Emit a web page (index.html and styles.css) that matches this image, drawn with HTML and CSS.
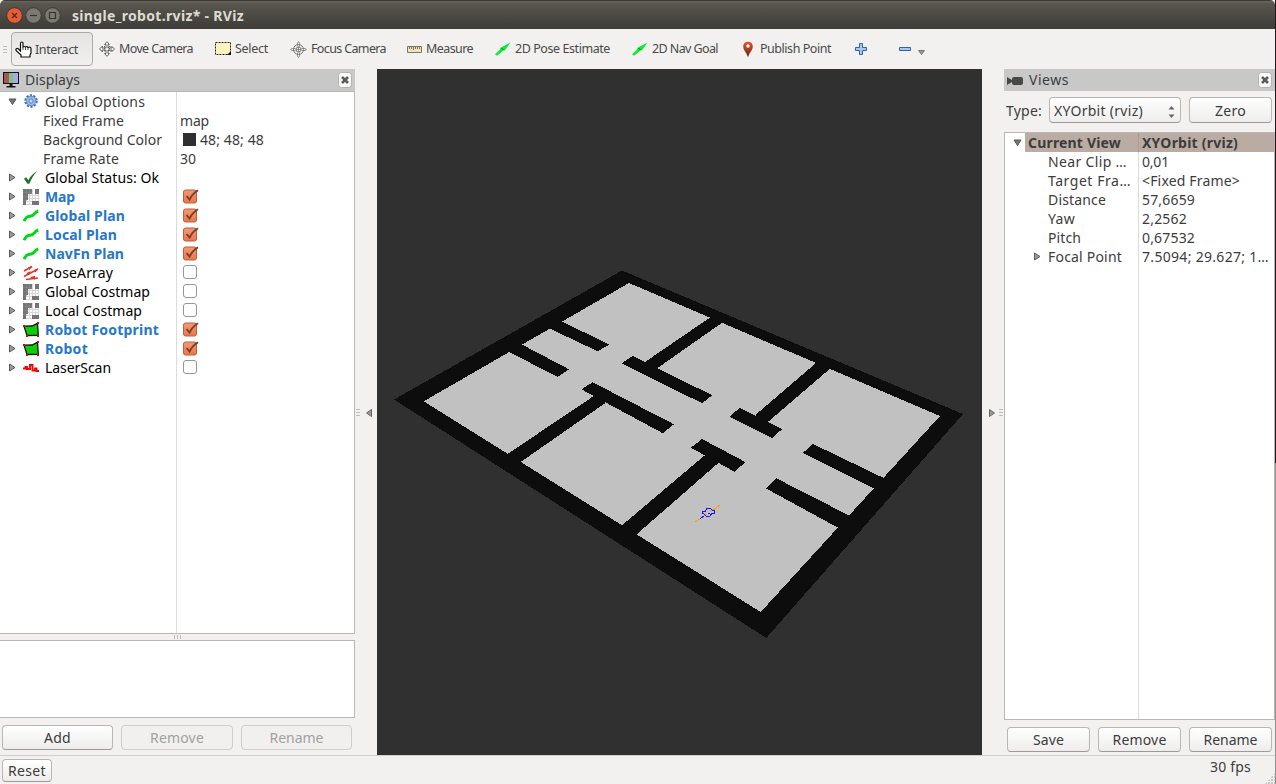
FILE: index.html
```html
<!DOCTYPE html>
<html lang="en">
<head>
<meta charset="utf-8">
<title>single_robot.rviz* - RViz</title>
<link rel="stylesheet" href="styles.css">
</head>
<body>
<svg class="defs" width="0" height="0">
  <defs>
    <linearGradient id="pinfill" x1="0" y1="0" x2="0" y2="1"><stop offset="0" stop-color="#f04b2c"/><stop offset="1" stop-color="#54301c"/></linearGradient>
    <linearGradient id="checkfill" x1="0" y1="0" x2="0" y2="1"><stop offset="0" stop-color="#f39a77"/><stop offset="1" stop-color="#ec7548"/></linearGradient>
    <symbol id="right" viewBox="0 0 8 9"><path d="M1.500 1 7 4.500 1.500 8Z" fill="#9a9a98" stroke="#5a5a58"/></symbol>
    <symbol id="down" viewBox="0 0 9 8"><path d="M1 1h7L4.500 6.500Z" fill="#777775" stroke="#555"/></symbol>
    <symbol id="close" viewBox="0 0 14 16"><rect x=".5" y=".5" width="13" height="15" rx="3" fill="#fbfbfa" stroke="#b2b2b0"/><path d="M4 5l6 6m0-6l-6 6" stroke="#5b5b59" stroke-width="2.600"/></symbol>
    <symbol id="gear" viewBox="0 0 14 14"><circle cx="7" cy="7" r="5.600" fill="none" stroke="#3c70b5" stroke-width="2.200" stroke-dasharray="2.200 1.300"/><circle cx="7" cy="7" r="4.700" fill="#9dbde4" stroke="#5f8fcd"/><circle cx="7" cy="7" r="2.200" fill="none" stroke="#5b8bc8"/><circle cx="7" cy="7" r=".8" fill="#fff"/></symbol>
    <symbol id="ok" viewBox="0 0 16 16"><path d="M1 8.800 3.200 7.300l2.200 3C7.200 6.500 10 3.500 14 1 10.600 5 8.500 8.500 6.300 13.800H4.500Z" fill="#1d7325"/></symbol>
    <symbol id="map" viewBox="0 0 16 16"><path fill="#fff" d="M0 0h16v16H0z"/><path d="M6.500 0v16M9.500 0v16M12.500 0v16M15.500 4v12M5 6.500h11M5 9.500h11M3 12.500h13M3 15.500h13" stroke="#d6d6d6"/><path d="M0 0h9v5H5v6H3v5H0ZM12 0h4v5h-4ZM9 12h7v4H9Z" fill="#747474"/><path d="M3.500 0v12M6.500 0v5M0 3.500h9M0 7.500h5M0 11.500h3" stroke="#8c8c8c" stroke-width=".5"/></symbol>
    <symbol id="path" viewBox="0 0 16 16"><path d="M1 13.200C3 9.200 4 8.500 7 8.300 12 8 10.500 4.200 15.300 3" stroke="#00d815" stroke-width="2.900" fill="none"/></symbol>
    <symbol id="poses" viewBox="0 0 16 16"><g stroke="#e63127" fill="#e63127"><path d="M1 6 9 1.500M1 11.500 15 4M3 14.500l12-1.500" stroke-width="1.500"/><path d="M9.500 1 5 2.500 6.500 5ZM8 6 3.500 8l2 2.500ZM15.500 3.500 11 5l1.500 2.500ZM7 12.300l5-1.500v4Z" stroke="none"/></g></symbol>
    <symbol id="polygon" viewBox="0 0 16 16"><path d="M1 4.200 9 4l5.500-2.700.8 12L4 13.500Z" fill="#0ace0a" stroke="#111" stroke-width="1.300"/><path d="M0 3h2v2H0zM14 0h2v2h-2zM3 13h2v2H3zM14 13h2v2h-2zM8 3h1v1H8z" fill="#f00000"/></symbol>
    <symbol id="laser" viewBox="0 0 16 16"><path d="M0 8.500h2.500V7H4v2h3V5h2.500v5.500H12V8.500h1.500V11H16" stroke="#f20505" stroke-width="1.900" fill="none"/></symbol>
    <symbol id="checked" viewBox="0 0 17 16"><rect x="1.500" y="2" width="13" height="13" rx="2" fill="url(#checkfill)" stroke="#b9603f"/><path d="M4.500 8 7.500 11.500Q10 6 16 2.200" stroke="#7a4029" stroke-width="1.900" fill="none"/></symbol>
    <symbol id="unchecked" viewBox="0 0 17 16"><rect x="1.500" y="1.500" width="13" height="13" rx="2.500" fill="#fff" stroke="#969692"/></symbol>
    <symbol id="pose" viewBox="0 0 16 16"><path d="M0 13.300 5.500 8 5 7 15.500 1.500 9.800 9.500 8.700 9.300 2 14.800Z" fill="#0aee32"/><path d="m6.500 7 2 2" stroke="#087a1a"/></symbol>
  </defs>
</svg>
<div class="screen">
<div class="window">
  <header class="titlebar">
    <svg class="winbuttons" width="56" height="18" viewBox="0 0 56 18"><circle cx="8.500" cy="8.500" r="7.800" fill="#e95d35" stroke="#3b3a34"/><path d="m6 6 5 5m0-5-5 5" stroke="#592b1c" stroke-width="1.300"/><circle cx="27.500" cy="8.500" r="7.800" fill="#7b7972" stroke="#3b3a34"/><path d="M24 8.500h7" stroke="#35342e" stroke-width="1.200"/><circle cx="46.500" cy="8.500" r="7.800" fill="#7b7972" stroke="#3b3a34"/><path d="M43.500 5.500h6v6h-6z" fill="none" stroke="#35342e" stroke-width="1.200"/></svg>
    <b data-w="172">single_robot.rviz* - RViz</b>
  </header>
  <nav class="toolbar">
    <i class="griphandle"></i>
    <button class="tool interact"><svg width="17" height="17" viewBox="0 0 17 17"><path d="M5.500 10V2q1.500-2 2.500 0v4q1.500-1 2.500 0 1.500-1 2.500 .5 2.500-1 3 1v4.500l-1 2v2H6v-2L1 9.500Q.5 7 3 7.500Z" fill="#fff" stroke="#111" stroke-width="1.200"/><path d="M8 6v3m2.500-3v3M13 7v2" stroke="#555"/></svg><span data-w="43">Interact</span></button>
    <div class="tool move"><svg width="16" height="16" viewBox="0 0 16 16"><g fill="#f3f2ef" stroke="#5a5a5a" stroke-width=".9"><path d="M8 .7 10.500 3.500H9V7h4V5.500L15.500 8 13 10.500V9H9v3.500h1.500L8 15.300 5.500 12.500H7V9H3v1.500L.5 8 3 5.500V7h4V3.500H5.500Z"/><path d="M3 5.500 7 6.500m2 0 4-1M3 10.500l4-1m2 0 4 1M5.500 5v6m5-6v6" stroke-dasharray="1 1"/></g></svg><span data-w="74">Move Camera</span></div>
    <div class="tool select"><svg width="16" height="14" viewBox="0 0 16 14"><rect x=".5" y=".5" width="15" height="12" fill="#fcf4bd" stroke="#222" stroke-dasharray="2 1"/><path d="M12 13h4V9Z" fill="#111"/></svg><span data-w="33">Select</span></div>
    <div class="tool focus"><svg width="17" height="17" viewBox="0 0 17 17"><g fill="none" stroke="#777"><circle cx="8.500" cy="8.500" r="5"/><circle cx="8.500" cy="8.500" r="2.500"/><path d="M7.500 5.500V2l1-1.500 1 1.500v3.500M7.500 11.500V15l1 1.500 1-1.500v-3.500M5.500 7.500H2L.5 8.500 2 9.500h3.500m6-2H15l1.500 1-1.500 1h-3.500M8.500 6v5M6 8.500h5" stroke-width=".8"/></g></svg><span data-w="75">Focus Camera</span></div>
    <div class="tool measure"><svg width="15" height="7" viewBox="0 0 15 7"><path d="M.5.5h14v6H.5z" fill="#f1e6b1" stroke="#77746d"/><path d="M2.500 1v2m2-2v2m2-2v3m2-3v2m2-2v2m2-2v2" stroke="#77746d"/></svg><span data-w="47">Measure</span></div>
    <div class="tool pose"><svg width="16" height="16"><use href="#pose"/></svg><span data-w="95">2D Pose Estimate</span></div>
    <div class="tool nav"><svg width="16" height="16"><use href="#pose"/></svg><span data-w="66">2D Nav Goal</span></div>
    <div class="tool publish"><svg width="12" height="17" viewBox="0 0 12 17"><path d="M6 16.500C5 12 1.200 9.500 1.200 5.500a4.800 4.800 0 0 1 9.600 0C10.800 9.500 7 12 6 16.500Z" fill="url(#pinfill)"/><circle cx="6" cy="5" r="1.700" fill="#fff"/></svg><span data-w="71">Publish Point</span></div>
    <svg class="plus" width="12" height="12" viewBox="0 0 12 12"><path d="M4.500.5h3v4h4v3h-4v4h-3v-4h-4v-3h4Z" fill="#aac6e9" stroke="#3262a6"/></svg>
    <svg class="minus" width="12" height="4" viewBox="0 0 12 4"><path d="M.5.5h11v3H.5z" fill="#aac6e9" stroke="#3262a6"/></svg>
    <svg class="drop" width="7" height="5" viewBox="0 0 7 5"><path d="M.5.500h6L3.500 4.500Z" fill="#999" stroke="#777"/></svg>
  </nav>
  <main class="main">
    <section class="displays">
      <div class="dockhead"><svg width="16" height="16" viewBox="0 0 16 16"><path d="M0 0h16v12H0z" fill="#111"/><path fill="#a65858" d="M1 1h5v10H1z"/><path fill="#80c47f" d="M6 1h4v10H6z"/><path fill="#a9a9e6" d="M10 1h5v10h-5z"/><path d="M6.500 12h3v2h3v1.500h-9V14h3Z" fill="#111"/></svg><span data-w="55">Displays</span><svg class="x" width="14" height="16"><use href="#close"/></svg></div>
      <div class="tree left" id="display-tree"></div>
      <div class="splitter"><i></i></div>
      <div class="description"></div>
      <div class="actions"><button class="add"><span data-w="27">Add</span></button><button class="remove" disabled><span data-w="54">Remove</span></button><button class="rename" disabled><span data-w="54">Rename</span></button></div>
    </section>
    <div class="gutter leftgutter"><i class="griphandle"></i><svg width="6" height="8" viewBox="0 0 6 8"><path d="M5.500.5v7L.5 4Z" fill="#999" stroke="#666"/></svg></div>
    <svg class="viewport" viewBox="377 69 605 686" shape-rendering="crispEdges">
      <path d="M394 399.500 622 270.500 963 414 766.300 638Z" fill="#0d0d0d"/>
      <path d="M423.700 401.300 629 283 940 416 760.700 612Z" fill="#c1c1c1"/>
      <g fill="#0d0d0d">
        <path d="M562 321.300 609 344.700 597.700 351.300 548.500 328V318Z"/>
        <path d="M520.500 343.800 569 369.300 557.700 377 508.500 351.700V341Z"/>
        <path d="M632.700 356 621.300 363.300 702 403.200 712.300 395.300Z"/>
        <path d="M645 362 709.300 318 716 310 721.700 323 658 367.700 652 372Z"/>
        <path d="M592.700 382.300 581.300 389.300 662.700 433.200 674 424.300Z"/>
        <path d="M593.300 396.300 508 453.700 510 468 520.700 462 605.300 403 601 393Z"/>
        <path d="M739.700 408 729.300 416.700 772 438 782.300 429Z"/>
        <path d="M755.300 415 816 363 824 358 829.700 369 768.700 421.300 762 426Z"/>
        <path d="M702 439 691 447.700 734.700 471.900 745.300 462Z"/>
        <path d="M704.300 455.700 622.300 525 625 542 636.700 534.300 718.300 463 714 452Z"/>
        <path d="M813 444 802.700 453 873 488 884 492 884.300 478.300Z"/>
        <path d="M776.300 478.300 765.700 488.300 837.300 527.300 848 532 848.700 515.300Z"/>
      </g>
      <path d="m695 522 5-3m13-9 7-5" stroke="#ff9800" fill="none"/><path d="m700 519 5-4" stroke="#1616ff"/><path d="m704 516 3-2m3-2 4-3" stroke="#ff9800"/><path d="m702.500 512 3-1 1-2.500h4l1.500 1.500 2.500 1v2l-3 1-1.500 2h-4l-2-2-1.500-1Zm5 1h2" stroke="#1616ff" fill="none"/>
    </svg>
    <div class="gutter rightgutter"><svg width="6" height="8" viewBox="0 0 6 8"><path d="M.5.5v7l5-3.500Z" fill="#999" stroke="#666"/></svg><i class="griphandle"></i></div>
    <section class="views">
      <div class="dockhead"><svg class="camera" width="16" height="10" viewBox="0 0 16 10"><path d="M0 1 5 4V3q0-2 2-2h7q2 0 2 2v4q0 2-2 2H7Q5 9 5 7V6L0 9Z" fill="#484848"/></svg><span data-w="40">Views</span><svg class="x" width="14" height="16"><use href="#close"/></svg></div>
      <div class="type"><span data-w="36">Type:</span><button class="combo"><span data-w="89">XYOrbit (rviz)</span><svg width="7" height="12" viewBox="0 0 7 12"><path d="M.5 3.500 3.500 0l3 3.500Zm0 5h6L3.500 12Z" fill="#666"/></svg></button><button class="zero"><span data-w="31">Zero</span></button></div>
      <div class="tree right" id="view-tree"></div>
      <div class="actions"><button><span data-w="31">Save</span></button><button><span data-w="54">Remove</span></button><button><span data-w="54">Rename</span></button></div>
    </section>
  </main>
  <footer class="status"><button><span data-w="38">Reset</span></button><span class="fps" data-w="41">30 fps</span><i class="sizegrip"></i></footer>
</div>
<div class="edge"></div>
</div>
<script src="app.js"></script>
</body>
</html>
```
FILE: styles.css
```css
* { box-sizing: border-box; }
body { margin: 0; overflow: hidden; font: 14px/19px "Noto Sans", "Open Sans", sans-serif; color: #3c3c3c; }
svg { display: block; flex: none; }
.defs { position: absolute; }
span, b { white-space: pre; }
.screen { display: flex; width: 1276px; height: 784px; background: #2a1820; }
.window { width: 1275px; height: 784px; display: flex; flex-direction: column; background: #f2f1f0; }
.edge { width: 1px; background: linear-gradient(#26121d 0 463px, #92928f 463px); }
.titlebar { height: 29px; flex: none; display: flex; align-items: center; padding: 2px 0 0 6px; background: linear-gradient(#3b3a34 0 1px, #66645a 1px 2px, #59574f 3px, #3d3c37); color: #dfdbd2; font-size: 14px; border-radius: 5px 5px 0 0; }
.winbuttons { margin-right: 10px; }
.toolbar { height: 40px; flex: none; display: flex; align-items: center; font-size: 12.5px; color: #494949; }
.griphandle { display: block; width: 4px; height: 8px; background: repeating-linear-gradient(#bdbdbb 0 1px, transparent 1px 3px); }
.toolbar > .griphandle { margin: 2px 4px 0 3px; }
.tool { display: flex; align-items: center; gap: 4px; height: 34px; padding: 0; flex: none; }
.tool span { margin-top: -1px; }
button { font: inherit; color: inherit; border: 1px solid #b9b7b4; border-bottom-color: #9c9a98; border-radius: 4px; padding: 0; background: linear-gradient(#fff, #eeedec); }
.interact { width: 82px; padding-left: 3px; gap: 3px; margin-right: 6px; background: linear-gradient(#e5e4e2, #f1f0ee); border-color: #aaa9a6; }
.interact span { margin-top: 1px; }
.interact svg { margin-top: 1px; }
.move { width: 116px; }
.select { width: 75px; }
.focus { width: 117px; }
.measure { width: 82px; }
.pose { width: 143px; padding-left: 6px; }
.nav { width: 110px; }
.publish { width: 113px; gap: 6px; }
.minus { margin-left: 32px; }
.drop { margin: 7px 0 0 7px; }
.main { height: 686px; flex: none; display: flex; }
.displays { width: 355px; display: flex; flex-direction: column; }
.dockhead { height: 22px; flex: none; background: #c8c8c8; display: flex; align-items: center; padding-left: 3px; gap: 6px; }
.dockhead span { margin-top: -2px; }
.dockhead .x { margin: 0 3px 0 auto; }
.dockhead .camera { margin-top: 2px; }
.tree { background: #fff; border: 1px solid #bab8b5; overflow: hidden; }
.tree.left { height: 543px; border-left: 0; background: linear-gradient(#dcdcdc, #dcdcdc) 176px 0 / 1px 100% no-repeat #fff; }
.tree.right { height: 588px; margin-top: 8px; background: linear-gradient(#dcdcdc, #dcdcdc) 133px 0 / 1px 100% no-repeat #fff; }
.row { height: 19px; display: flex; align-items: center; }
.name { display: flex; align-items: center; }
.left .name { width: 180px; }
.left .arrow { width: 15px; margin-left: 8px; }
.left .icon { width: 22px; }
.gearcell { padding: 0 0 2px 1px; }
.left .value { display: flex; align-items: center; gap: 4px; }
.left .check { margin: -2px 0 0 2px; }
.status-name { color: #000; }
.enabled { font-weight: bold; color: #2777c8; }
.swatch { width: 13px; height: 13px; background: #303030; margin-left: 3px; }
.nested { padding-left: 43px; }
.right .name { width: 137px; padding-left: 43px; }
.right .hasarrow { padding-left: 28px; }
.right .hasarrow svg { margin-right: 7px; }
.right .current { font-weight: bold; background: linear-gradient(#a89d95, #a89d95) 133px 0 / 1px 100% no-repeat, linear-gradient(90deg, #fff 20px, #baaca2 20px); }
.right .current .name { padding-left: 8px; }
.right .current svg { margin-right: 6px; }
.splitter { height: 6px; display: flex; justify-content: center; align-items: center; }
.splitter i { width: 8px; height: 4px; background: repeating-linear-gradient(90deg, #bcbcb9 0 1px, transparent 1px 3px); }
.description { height: 78px; background: #fff; border: 1px solid #bab8b5; border-left: 0; }
.actions { display: flex; gap: 8px; padding: 7px 3px 0 2px; }
.actions button { height: 25px; flex: 1; }
.displays .actions .remove { flex: 0 0 112px; }
.actions button:disabled { color: #a1a19e; background: #f1f0ef; border-color: #cfcecc; }
.views .actions { padding: 7px 3px 0; }
.gutter { width: 22px; display: flex; align-items: center; padding-top: 1px; }
.leftgutter { gap: 6px; padding-left: 1px; }
.rightgutter { gap: 4px; padding-left: 7px; }
.viewport { width: 605px; height: 686px; background: #303030; }
.views { width: 271px; display: flex; flex-direction: column; }
.type { height: 33px; display: flex; align-items: flex-end; padding: 0 3px 1px 2px; }
.type > span { align-self: flex-start; margin-top: 10px; width: 43px; }
.type button { height: 26px; }
.combo { width: 132px; display: flex; align-items: center; justify-content: space-between; padding: 0 5px 0 4px; }
.combo svg { margin-top: 3px; }
.zero { width: 83px; margin-left: auto; }
.status { height: 29px; border-top: 1px solid #cfceca; display: flex; align-items: flex-start; padding-left: 2px; }
.status button { width: 50px; height: 23px; margin-top: 3px; line-height: 18px; }
.fps { margin: 1px 14px 0 auto; }
.sizegrip { width: 10px; height: 11px; margin-top: 17px; background: radial-gradient(circle at 1px 1px, #c5c4c0 1px, transparent 1px) 0 0 / 3px 3px; clip-path: polygon(100% 0, 100% 100%, 0 100%); }
```
FILE: app.js
```js
// Display properties: label, label width, icon, value, value width
const displays = [
  ['Fixed Frame', 81, null, 'map', 29],
  ['Background Color', 119, 'swatch', '48; 48; 48', 64],
  ['Frame Rate', 76, null, '30', 16]
];
const items = [
  ['Global Status: Ok', 114, 'ok', null],
  ['Map', 30, 'map', true], ['Global Plan', 80, 'path', true],
  ['Local Plan', 72, 'path', true], ['NavFn Plan', 79, 'path', true],
  ['PoseArray', 68, 'poses', false], ['Global Costmap', 105, 'map', false],
  ['Local Costmap', 97, 'map', false], ['Robot Footprint', 114, 'polygon', true],
  ['Robot', 43, 'polygon', true], ['LaserScan', 66, 'laser', false]
];
const label = (t, w, c = '') => `<span class="${c}" data-w="${w}">${t}</span>`;
const use = (id, w, h) => `<svg width="${w}" height="${h}"><use href="#${id}"/></svg>`;

let html = `<div class="row"><div class="name"><div class="arrow">${use('down', 9, 8)}</div><div class="icon gearcell">${use('gear', 14, 14)}</div>${label('Global Options', 100)}</div></div>`;
for (const [t, w, icon, v, vw] of displays) {
  html += `<div class="row"><div class="name nested">${label(t, w)}</div><div class="value">${icon ? '<i class="swatch"></i>' : ''}${label(v, vw)}</div></div>`;
}
for (const [t, w, icon, on] of items) {
  html += `<div class="row"><div class="name"><div class="arrow">${use('right', 8, 9)}</div><div class="icon">${use(icon, 16, 16)}</div>${label(t, w, on ? 'enabled' : 'status-name')}</div>${on === null ? '' : `<div class="check">${use(on ? 'checked' : 'unchecked', 17, 16)}</div>`}</div>`;
}
document.getElementById('display-tree').innerHTML = html;

const views = [
  ['Near Clip …', 79, '0,01', 27], ['Target Fra…', 83, '&lt;Fixed Frame&gt;', 98],
  ['Distance', 58, '57,6659', 53], ['Yaw', 27, '2,2562', 45],
  ['Pitch', 33, '0,67532', 53], ['Focal Point', 74, '7.5094; 29.627; 1…', 127]
];
html = `<div class="row current"><div class="name">${use('down', 9, 8)}${label('Current View', 93)}</div>${label('XYOrbit (rviz)', 96)}</div>`;
for (const [t, w, v, vw] of views) {
  const arrow = t === 'Focal Point';
  html += `<div class="row"><div class="name ${arrow ? 'hasarrow' : ''}">${arrow ? use('right', 8, 9) : ''}${label(t, w)}</div>${label(v, vw)}</div>`;
}
document.getElementById('view-tree').innerHTML = html;

// Track each label so it fills its measured width
for (const el of document.querySelectorAll('[data-w]')) {
  const range = document.createRange();
  range.selectNodeContents(el);
  const natural = range.getBoundingClientRect().width;
  el.style.letterSpacing = (el.dataset.w - natural) / el.textContent.length + 'px';
}
```
